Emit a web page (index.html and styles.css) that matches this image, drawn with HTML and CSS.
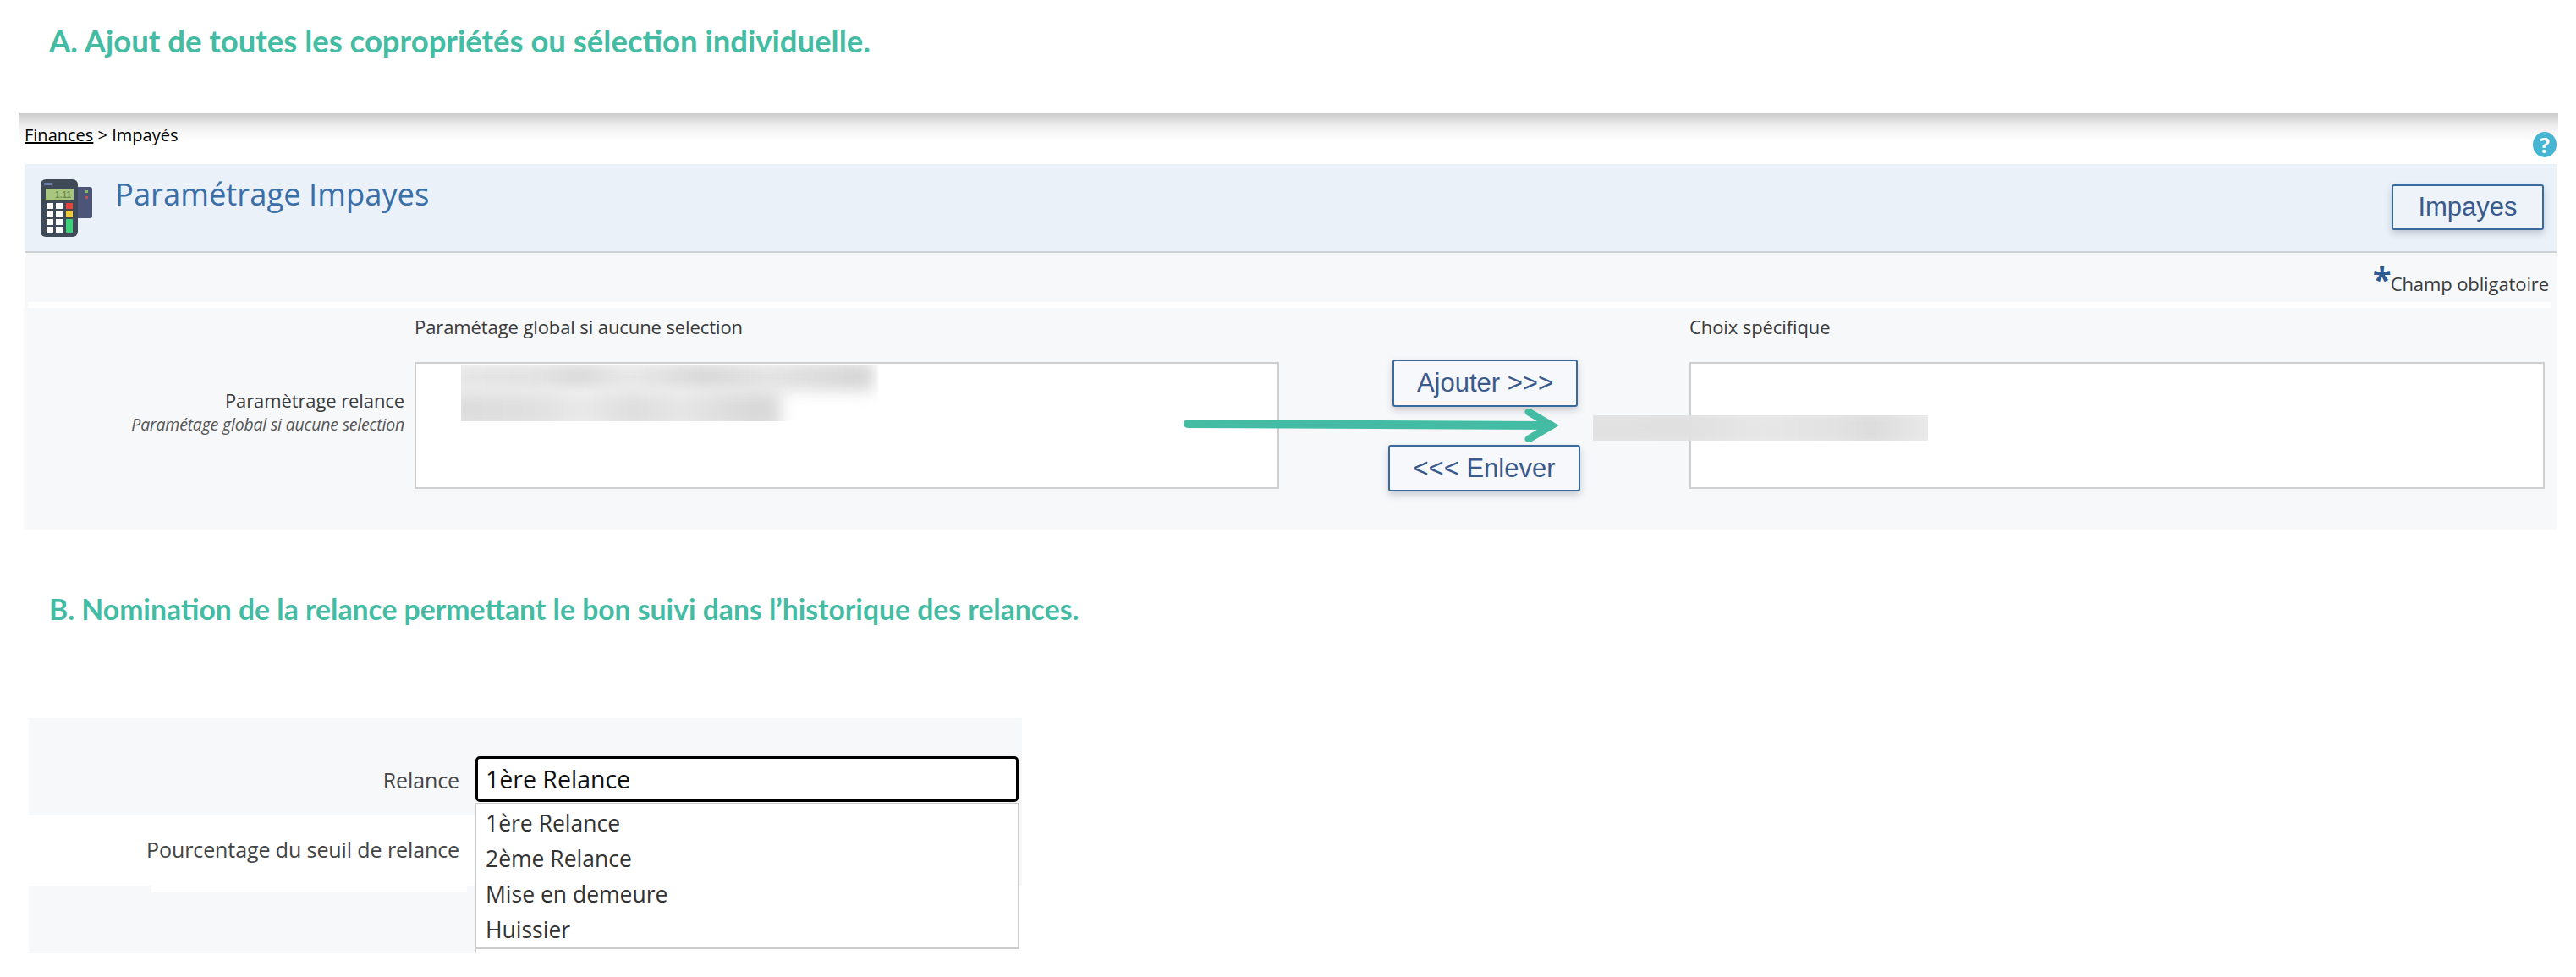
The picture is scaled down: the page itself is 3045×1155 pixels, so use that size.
FILE: index.html
```html
<!DOCTYPE html>
<html lang="fr">
<head>
<meta charset="utf-8">
<title>Paramétrage Impayes</title>
<link rel="stylesheet" href="styles.css">
</head>
<body>
<h2 class="step step-a">A. Ajout de toutes les copropriétés ou sélection individuelle.</h2>

<section class="app">
  <div class="crumbs">
    <div class="crumb-text"><a href="#">Finances</a> &gt; Impayés</div>
    <div class="help">?</div>
  </div>
  <header class="band">
    <svg class="terminal" viewBox="0 0 61 68" width="61" height="68" aria-hidden="true">
      <rect x="40" y="9" width="21" height="37" rx="3" fill="#4c5478"/>
      <rect x="53" y="13" width="3" height="3" fill="#7fbf5a"/>
      <rect x="53" y="20" width="3" height="3" fill="#c4504f"/>
      <rect x="0" y="0" width="44" height="68" rx="6" fill="#3f4a58"/>
      <rect x="4" y="4" width="9" height="3" fill="#6a7bb0"/>
      <rect x="6" y="11" width="33" height="13" fill="#a9c67f"/>
      <text x="36" y="22" text-anchor="end" class="lcd">1.11</text>
      <g fill="#ffffff">
        <rect x="7" y="28" width="8" height="7"/><rect x="18" y="28" width="8" height="7"/>
        <rect x="7" y="37" width="8" height="7"/><rect x="18" y="37" width="8" height="7"/>
        <rect x="7" y="47" width="8" height="7"/><rect x="18" y="47" width="8" height="7"/>
        <rect x="7" y="56" width="8" height="7"/><rect x="18" y="56" width="8" height="7"/>
      </g>
      <rect x="30" y="28" width="8" height="7" fill="#e8423c"/>
      <rect x="30" y="37" width="8" height="7" fill="#f0c93a"/>
      <rect x="30" y="47" width="8" height="16" fill="#3fd07a"/>
    </svg>
    <h1 class="title">Paramétrage Impayes</h1>
    <button class="btn btn-impayes" type="button">Impayes</button>
  </header>
  <div class="required"><span class="star">*</span><span class="req-text">Champ obligatoire</span></div>
  <div class="strip"></div>
  <div class="form">
    <div class="col-title">Paramétage global si aucune selection</div>
    <div class="col-title col-title-right">Choix spécifique</div>
    <div class="field-label">
      <div class="label-main">Paramètrage relance</div>
      <div class="label-sub">Paramétage global si aucune selection</div>
    </div>
    <div class="listbox listbox-left">
      <div class="redact">
        <div class="bar bar-1"></div>
        <div class="bar bar-2"></div>
      </div>
    </div>
    <div class="actions">
      <button class="btn btn-add" type="button">Ajouter &gt;&gt;&gt;</button>
      <button class="btn btn-remove" type="button">&lt;&lt;&lt; Enlever</button>
    </div>
    <div class="listbox listbox-right"></div>
  </div>
  <div class="moved"><div class="bar bar-3"></div></div>
  <svg class="arrow" viewBox="0 0 446 40" width="446" height="40" aria-hidden="true">
    <path d="M5 18 L434 20" class="arrow-line"/>
    <path d="M408 4 L435 20 L408 36" class="arrow-head"/>
  </svg>
</section>

<h2 class="step step-b">B. Nomination de la relance permettant le bon suivi dans l’historique des relances.</h2>

<section class="relance">
  <div class="rel-row rel-row-1">
    <div class="rel-label">Relance</div>
    <div class="select">1ère Relance</div>
  </div>
  <div class="rel-row rel-row-2">
    <div class="rel-label">Pourcentage du seuil de relance</div>
  </div>
  <div class="rel-row-3">
    <div class="rel-fill"><div class="notch"></div></div>
  </div>
  <ul class="menu">
    <li>1ère Relance</li>
    <li>2ème Relance</li>
    <li>Mise en demeure</li>
    <li>Huissier</li>
  </ul>
</section>
</body>
</html>
```

FILE: styles.css
```css
* { box-sizing: border-box; }
html, body { margin: 0; padding: 0; }
body {
  width: 3045px;
  height: 1155px;
  overflow: hidden;
  background: #fff;
  font-family: "Open Sans", "Liberation Sans", sans-serif;
  color: #3a3a3a;
}
.step {
  margin: 0;
  padding-left: 58px;
  font-family: Lato, "Open Sans", sans-serif;
  font-weight: 700;
  line-height: 40px;
  color: #43bca3;
}
.step-a { padding-top: 28px; height: 133px; font-size: 36.5px; }
.step-b { padding-top: 74px; height: 223px; font-size: 33.7px; }

.app {
  position: relative;
  margin-left: 23px;
  width: 3001px;
  padding: 0 2px 0 6px;
  height: 493px;
  background: linear-gradient(#c9c9c9 0, #efefef 16px, #fff 34px);
}
.crumbs { height: 61px; display: flex; justify-content: space-between; align-items: flex-start; }
.crumb-text { margin-top: 14px; font-size: 20px; line-height: 26px; color: #000; }
.crumb-text a { color: #000; text-decoration: underline; }
.help {
  margin-top: 23px;
  width: 28px;
  height: 30px;
  border-radius: 50%;
  background: #45b5d1;
  color: #fff;
  font-weight: 700;
  font-size: 25px;
  line-height: 30px;
  text-align: center;
}
.band {
  height: 105px;
  background: #eaf1f9;
  border-bottom: 2px solid #cfd1d4;
  display: flex;
  align-items: flex-start;
  padding: 18px 15px 0 19px;
}
.terminal { flex: none; }
.lcd { font: 700 10px "Liberation Sans", sans-serif; fill: #6d8a4f; }
.title {
  margin: -8px 0 0 27px;
  font-size: 36.4px;
  line-height: 50px;
  font-weight: 500;
  color: #3a6fa8;
}
.btn {
  background: #f6f8fc;
  border: 2px solid #3a6a9c;
  border-radius: 3px;
  box-shadow: 0 4px 8px rgba(60, 70, 90, .25);
  color: #3b5a8c;
  font-family: "Liberation Sans", sans-serif;
  font-size: 31px;
  padding: 0;
}
.btn-impayes { margin: 6px 0 0 auto; width: 180px; height: 54px; background: #eef3fa; }
.required {
  height: 58px;
  background: #f7f8fa;
  display: flex;
  justify-content: flex-end;
  padding-right: 9px;
  color: #3a3a3a;
}
.star { font-size: 40px; line-height: 40px; margin-top: 11px; height: 30px; color: #2f5a8f; font-weight: 700; width: 21px; }
.req-text { font-size: 22px; line-height: 30px; margin-top: 21px; letter-spacing: -0.1px; }
.strip { height: 7px; margin: 0 6px 0 4px; background: #fff; box-shadow: -4px 0 0 #f7f8fa, 6px 0 0 #f7f8fa; }
.form {
  margin-left: -1px;
  height: 262px;
  background: #f7f8fa;
  display: grid;
  grid-template-columns: 462px 1022px 485px 1011px;
  grid-template-rows: 64px 150px;
}
.col-title { grid-column: 2; grid-row: 1; font-size: 22px; line-height: 30px; margin-top: 7px; letter-spacing: -0.1px; }
.col-title-right { grid-column: 4; }
.field-label { grid-column: 1; grid-row: 2; text-align: right; padding: 28px 12px 0 0; }
.label-main { font-size: 22px; line-height: 34px; letter-spacing: -0.1px; }
.label-sub { font-size: 19.5px; line-height: 24px; font-style: italic; letter-spacing: -0.2px; color: #555; }
.listbox { grid-row: 2; background: #fff; border: 2px solid #cfcfcf; padding: 2px 0 0 53px; }
.listbox-left { grid-column: 2; }
.listbox-right { grid-column: 4; }
.redact { width: 493px; height: 66px; overflow: hidden; }
.bar { filter: blur(9px); }
.bar-1 {
  width: 500px;
  height: 34px;
  margin: -4px 0 0 -12px;
  background: linear-gradient(90deg, #e6e6e6, #e2e2e2 22%, #d9d9d9 30%, #e8e8e8 42%, #d8d8d8 60%, #e4e4e4 75%, #d6d6d6 95%);
}
.bar-2 {
  width: 390px;
  height: 46px;
  margin: 0 0 0 -12px;
  background: linear-gradient(90deg, #dcdcdc, #e0e0e0 25%, #e9e9e9 40%, #dedede 55%, #e6e6e6 70%, #d9d9d9 90%);
}
.actions { grid-column: 3; grid-row: 2; display: flex; flex-direction: column; align-items: center; margin-top: -3px; }
.btn-add { width: 219px; height: 56px; margin-left: 2px; flex: none; }
.btn-remove { width: 227px; height: 55px; margin-top: 45px; flex: none; }
.moved {
  position: absolute;
  left: 1860px;
  top: 358px;
  width: 396px;
  height: 30px;
  overflow: hidden;
}
.bar-3 {
  width: 430px;
  height: 50px;
  margin: -10px 0 0 -15px;
  background: linear-gradient(90deg, #e1e1e2, #e0e0e1 30%, #e7e7e7 50%, #e2e2e2 70%, #dcdcdc 80%, #ececec 100%);
}
.arrow { position: absolute; left: 1376px; top: 350px; }
.arrow-line { fill: none; stroke: #43bca3; stroke-width: 10; stroke-linecap: round; }
.arrow-head { fill: none; stroke: #43bca3; stroke-width: 9; stroke-linecap: round; stroke-linejoin: miter; }

.relance { position: relative; margin-left: 34px; width: 1174px; height: 278px; }
.rel-row { display: flex; align-items: flex-start; }
.rel-row-1 { height: 115px; background: #f7f8fa; padding-top: 45px; }
.rel-row-2 { height: 83px; background: #fff; border-right: 4px solid #f7f8fa; padding-top: 24px; }
.rel-label { width: 509px; flex: none; text-align: right; font-size: 25px; line-height: 32px; letter-spacing: -0.1px; color: #444; }
.rel-row-1 .rel-label { margin-top: 12px; }
.select {
  margin-left: 19px;
  width: 642px;
  height: 54px;
  border: 3px solid #000;
  border-radius: 5px;
  background: #fff;
  font-size: 28.5px;
  line-height: 48px;
  padding-left: 9px;
  color: #111;
}
.rel-row-3 { height: 80px; }
.rel-fill { width: 529px; height: 80px; background: #f7f8fa; border-right: 1px solid #ccc; }
.notch { margin-left: 145px; width: 373px; height: 8px; background: #fff; }
.menu {
  position: absolute;
  left: 528px;
  top: 100px;
  width: 642px;
  height: 173px;
  margin: 0;
  padding: 2px 0 0 11px;
  list-style: none;
  background: #fff;
  border: 1px solid #ccc;
  border-bottom: 2px solid #ccc;
  font-size: 26.5px;
  line-height: 42px;
  color: #333;
}
```
